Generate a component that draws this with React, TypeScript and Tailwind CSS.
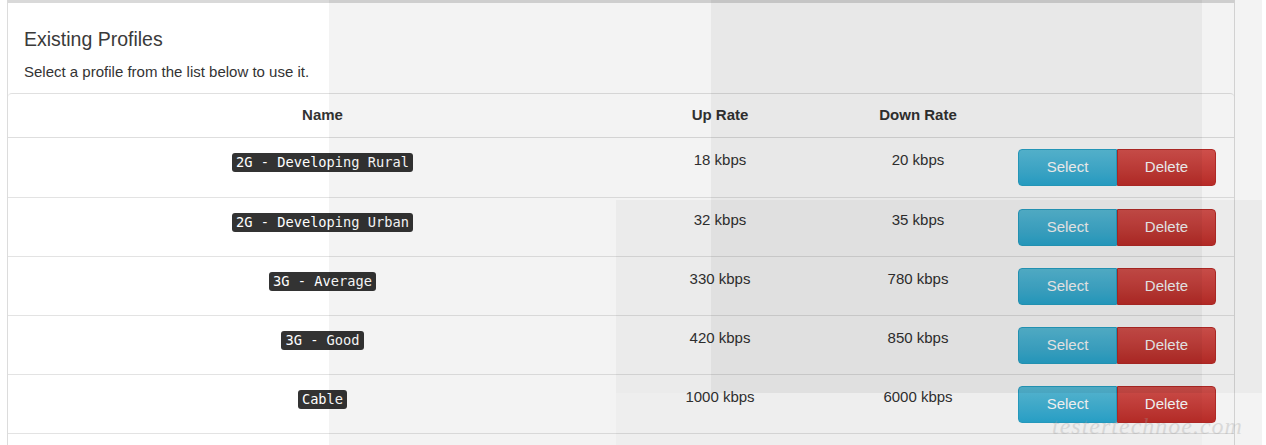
import React from "react";

const rows = [
  { name: "2G - Developing Rural", up: "18 kbps", down: "20 kbps" },
  { name: "2G - Developing Urban", up: "32 kbps", down: "35 kbps" },
  { name: "3G - Average", up: "330 kbps", down: "780 kbps" },
  { name: "3G - Good", up: "420 kbps", down: "850 kbps" },
  { name: "Cable", up: "1000 kbps", down: "6000 kbps" },
];

export default function App() {
  return (
    <div
      className="relative w-[1266px] h-[445px] overflow-hidden bg-white text-[#333]"
      style={{ fontFamily: '"Liberation Sans", Arial, sans-serif' }}
    >
      <div className="pl-[7px] w-[1235px]">
        <div className="border-l border-r border-[#dcdcdc] border-t-[3px] border-t-[#d9d9d9]">
          <div className="pl-4 pt-[26px] pb-[11px]">
            <h4 className="text-[19.5px] leading-[21px] text-[#3a3a3a]">Existing Profiles</h4>
            <p className="mt-[12px] text-[15px] leading-[20px] text-[#333]">
              Select a profile from the list below to use it.
            </p>
          </div>
          <div className="border-t border-[#e0e0e0] rounded-t-[4px] text-[15px]">
            <div className="flex h-[44px] items-center border-b border-[#dedede] font-bold">
              <div className="w-[629px] text-center">Name</div>
              <div className="w-[166px] text-center">Up Rate</div>
              <div className="w-[207px] pl-[23px] text-center">Down Rate</div>
              <div className="flex-1" />
            </div>
            {rows.map((r, i) => (
              <div
                key={r.name}
                className={`flex border-b border-[#e3e3e3] ${i === 0 ? "h-[60px]" : "h-[59px]"}`}
              >
                <div className="w-[629px] pt-[14px] text-center leading-[19px]">
                  <code
                    className="inline-block rounded-[3px] bg-[#333] px-[4px] text-[13.7px] leading-[19px] text-white"
                    style={{ fontFamily: '"DejaVu Sans Mono", monospace' }}
                  >
                    {r.name}
                  </code>
                </div>
                <div className="w-[166px] pt-[12px] text-center leading-[20px]">{r.up}</div>
                <div className="w-[207px] pl-[23px] pt-[12px] text-center leading-[20px]">{r.down}</div>
                <div className="flex-1 pl-2 pt-[11px]">
                  <div className="flex">
                    <button className="h-[37px] w-[99px] rounded-l-[4px] border border-[#28a4c9] bg-gradient-to-b from-[#5bc0de] to-[#2aabd2] text-[15px] text-white">
                      Select
                    </button>
                    <button className="h-[37px] w-[99px] rounded-r-[4px] border border-[#b92c28] bg-gradient-to-b from-[#d9534f] to-[#c12e2a] text-[15px] text-white">
                      Delete
                    </button>
                  </div>
                </div>
              </div>
            ))}
            <div className="h-[40px]" />
          </div>
        </div>
      </div>

      {/* translucent overlays captured in the screenshot */}
      <div className="pointer-events-none absolute left-[329px] top-0 h-[445px] w-[933px] bg-black/[0.047]" />
      <div className="pointer-events-none absolute left-[711px] top-0 h-[393px] w-[491px] bg-black/[0.045]" />
      <div className="pointer-events-none absolute left-[616px] top-[200px] h-[193px] w-[646px] bg-black/[0.033]" />
      <div className="pointer-events-none absolute left-[616px] top-[393px] h-[52px] w-[586px] bg-black/[0.02]" />

      {/* watermark */}
      <div
        className="pointer-events-none absolute left-[1052px] top-[408px] text-[24px] italic tracking-[1px] text-[#a0a0a0] opacity-30"
        style={{ fontFamily: '"Liberation Serif", serif' }}
      >
        testertechnoe.com
      </div>
    </div>
  );
}
